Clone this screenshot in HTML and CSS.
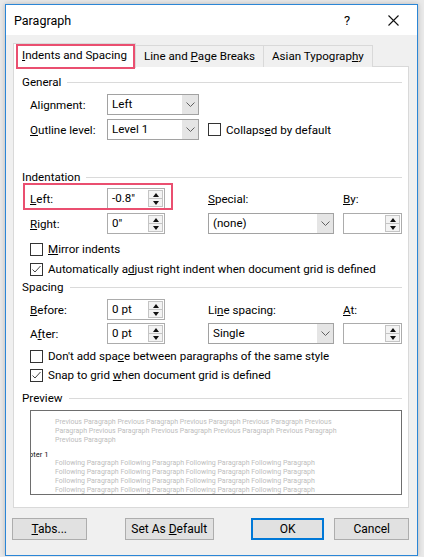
FILE: index.html
```html
<!DOCTYPE html>
<html>
<head>
<meta charset="utf-8">
<title>Paragraph</title>
<link rel="stylesheet" href="styles.css">
</head>
<body>
<div class="dialog">
	<div class="titlebar">
		<span class="title">Paragraph</span>
		<span class="help">?</span>
		<span class="close"><svg width="11" height="11" viewBox="0 0 11 11"><path d="M0.5 0.5L10.5 10.5M10.5 0.5L0.5 10.5" stroke="#111" stroke-width="1.1" fill="none"/></svg></span>
	</div>

	<div class="content">
		<div class="tabs">
			<div class="tab active mark"><u>I</u>ndents and Spacing</div>
			<div class="tab">Line and <u>P</u>age Breaks</div>
			<div class="tab">Asian Typograp<u>h</u>y</div>
		</div>

		<div class="panel">
			<div class="group-head">General</div>
			<div class="row r-align">
				<span class="lbl">Ali<u>g</u>nment:</span>
				<div class="select w-short"><span class="val">Left</span><span class="drop"><svg width="9" height="5" viewBox="0 0 9 5"><path d="M0.5 0.5L4.5 4.5L8.5 0.5" stroke="#606060" fill="none"/></svg></span></div>
			</div>
			<div class="row r-outline">
				<span class="lbl"><u>O</u>utline level:</span>
				<div class="select w-short"><span class="val">Level 1</span><span class="drop"><svg width="9" height="5" viewBox="0 0 9 5"><path d="M0.5 0.5L4.5 4.5L8.5 0.5" stroke="#606060" fill="none"/></svg></span></div>
				<label class="check side"><span class="box"></span><span>Collaps<u>e</u>d by default</span></label>
			</div>

			<div class="group-head h-indent">Indentation</div>
			<div class="row r-left">
				<div class="pair mark">
					<span class="lbl"><u>L</u>eft:</span>
					<div class="spin"><span class="val">-0.8"</span><span class="arrows"><i><b class="up"></b></i><i><b class="dn"></b></i></span></div>
				</div>
				<span class="col2"><u>S</u>pecial:</span>
				<span class="col3"><u>B</u>y:</span>
			</div>
			<div class="row r-right">
				<span class="lbl"><u>R</u>ight:</span>
				<div class="spin"><span class="val">0"</span><span class="arrows"><i><b class="up"></b></i><i><b class="dn"></b></i></span></div>
				<div class="select col2 w-wide"><span class="val">(none)</span><span class="drop"><svg width="9" height="5" viewBox="0 0 9 5"><path d="M0.5 0.5L4.5 4.5L8.5 0.5" stroke="#606060" fill="none"/></svg></span></div>
				<div class="spin col3 w-by"><span class="val"></span><span class="arrows"><i><b class="up"></b></i><i><b class="dn"></b></i></span></div>
			</div>
			<label class="check r-mirror"><span class="box"></span><span><u>M</u>irror indents</span></label>
			<label class="check r-auto"><span class="box"><svg width="11" height="11" viewBox="0 0 11 11"><path d="M1.5 5.5L4 8L9.5 2" stroke="#444" fill="none"/></svg></span><span>Automatically a<u>d</u>just right indent when document grid is defined</span></label>

			<div class="group-head h-spacing">Spacing</div>
			<div class="row r-before">
				<span class="lbl"><u>B</u>efore:</span>
				<div class="spin"><span class="val">0 pt</span><span class="arrows"><i><b class="up"></b></i><i><b class="dn"></b></i></span></div>
				<span class="col2">Li<u>n</u>e spacing:</span>
				<span class="col3"><u>A</u>t:</span>
			</div>
			<div class="row r-after">
				<span class="lbl">A<u>f</u>ter:</span>
				<div class="spin"><span class="val">0 pt</span><span class="arrows"><i><b class="up"></b></i><i><b class="dn"></b></i></span></div>
				<div class="select col2 w-wide"><span class="val">Single</span><span class="drop"><svg width="9" height="5" viewBox="0 0 9 5"><path d="M0.5 0.5L4.5 4.5L8.5 0.5" stroke="#606060" fill="none"/></svg></span></div>
				<div class="spin col3 w-by"><span class="val"></span><span class="arrows"><i><b class="up"></b></i><i><b class="dn"></b></i></span></div>
			</div>
			<label class="check r-nospace"><span class="box"></span><span>Don't add spa<u>c</u>e between paragraphs of the same style</span></label>
			<label class="check r-snap"><span class="box"><svg width="11" height="11" viewBox="0 0 11 11"><path d="M1.5 5.5L4 8L9.5 2" stroke="#444" fill="none"/></svg></span><span>Snap to grid <u>w</u>hen document grid is defined</span></label>

			<div class="group-head h-preview">Preview</div>
			<div class="preview">
				<div class="pv-lines">
					<div>Previous Paragraph Previous Paragraph Previous Paragraph Previous Paragraph Previous</div>
					<div>Paragraph Previous Paragraph Previous Paragraph Previous Paragraph Previous Paragraph</div>
					<div>Previous Paragraph</div>
				</div>
				<div class="pv-current">Chapter 1</div>
				<div class="pv-lines">
					<div>Following Paragraph Following Paragraph Following Paragraph Following Paragraph</div>
					<div>Following Paragraph Following Paragraph Following Paragraph Following Paragraph</div>
					<div>Following Paragraph Following Paragraph Following Paragraph Following Paragraph</div>
					<div>Following Paragraph Following Paragraph Following Paragraph Following Paragraph</div>
				</div>
			</div>
		</div>

		<div class="buttons">
			<button class="btn b-tabs"><u>T</u>abs...</button>
			<button class="btn b-default">Set As <u>D</u>efault</button>
			<button class="btn b-ok">OK</button>
			<button class="btn b-cancel">Cancel</button>
		</div>
	</div>
</div>
</body>
</html>
```

FILE: styles.css
```css
body{
margin:0;
background:#e9e9e9;
font-family:Roboto, "Noto Sans", sans-serif;
font-size:11.6px;
color:#000;
}
u{
text-underline-offset:1px;
}
.dialog{
margin:4px 0 0 5px;
width:411px;
height:550px;
border:1px solid #2b86d6;
background:#f0f0f0;
box-shadow:0 0 5px rgba(0,0,0,.22);
}

/* title bar */
.titlebar{
height:30px;
background:#fff;
display:flex;
align-items:center;
}
.title{
padding-left:8px;
flex:1;
font-size:12.5px;
}
.help{
width:14px;
font-size:13px;
margin-right:30px;
}
.close{
display:flex;
margin-right:18px;
}

.content{
padding:8px 8px 0 7px;
}

/* tabs */
.tabs{
display:flex;
height:24px;
}
.tab{
box-sizing:border-box;
height:22px;
margin-top:2px;
padding:0 8px;
line-height:20px;
border:1px solid #d9d9d9;
border-bottom:none;
border-left:none;
background:#f0f0f0;
}
.tab.active{
height:25px;
margin-top:0;
line-height:23px;
border-left:1px solid #d9d9d9;
background:#fff;
position:relative;
z-index:1;
}
.mark{
position:relative;
}
.mark::after{
content:"";
position:absolute;
border:2px solid #ea4f70;
pointer-events:none;
}
.tab.mark::after{
left:2px;
right:0;
top:0;
bottom:-1px;
}

.panel{
box-sizing:border-box;
height:442px;
margin-top:-1px;
background:#fff;
border:1px solid #d9d9d9;
padding:7px 6px 0 8px;
}

.group-head{
display:flex;
align-items:center;
height:16px;
line-height:16px;
}
.group-head::after{
content:"";
flex:1;
margin-left:6px;
margin-top:1px;
border-top:1px solid #dadada;
}

.row{
display:flex;
align-items:center;
height:21px;
padding-left:8px;
}
.lbl{
width:77px;
}
.col2{
box-sizing:border-box;
margin-left:43px;
width:126px;
}
.col3{
box-sizing:border-box;
margin-left:9px;
width:59px;
}

.r-align{ margin-top:4px; }
.r-outline{ margin-top:4px; }
.h-indent{ margin-top:29px; }
.r-left{ margin-top:3px; }
.r-right{ margin-top:4px; }
.r-mirror{ margin-top:7px; }
.r-auto{ margin-top:4px; }
.h-spacing{ margin-top:2px; }
.r-before{ margin-top:4px; }
.r-after{ margin-top:3px; }
.r-nospace{ margin-top:4px; }
.r-snap{ margin-top:3px; }
.h-preview{ margin-top:7px; }

.pair{
display:flex;
align-items:center;
}
.pair.mark::after{
left:-7px;
right:-8px;
top:-5px;
bottom:-1px;
}

/* drop-down lists */
.select{
box-sizing:border-box;
display:flex;
height:21px;
border:1px solid #a2a2a2;
background:#fff;
}
.w-short{ width:92px; }
.w-wide{ width:126px; }
.select .val{
flex:1;
padding-left:4px;
line-height:19px;
}
.select .drop{
width:16px;
background:#e5e5e5;
display:flex;
align-items:center;
justify-content:center;
}

/* spin boxes */
.spin{
box-sizing:border-box;
display:flex;
width:58px;
height:21px;
border:1px solid #acacac;
background:#fff;
}
.w-by{ width:59px; }
.spin .val{
flex:1;
padding-left:4px;
line-height:19px;
}
.arrows{
width:15px;
display:flex;
flex-direction:column;
padding:1px 1px 1px 0;
}
.arrows i{
flex:1;
display:flex;
align-items:center;
justify-content:center;
border:1px solid #c4c4c4;
background:#f3f3f3;
}
.arrows i + i{
border-top:none;
}
.up{
width:0;
height:0;
border-left:3.5px solid transparent;
border-right:3.5px solid transparent;
border-bottom:4px solid #111;
}
.dn{
width:0;
height:0;
border-left:3.5px solid transparent;
border-right:3.5px solid transparent;
border-top:4px solid #111;
}

/* check boxes */
.check{
display:flex;
align-items:center;
height:16px;
padding-left:8px;
white-space:nowrap;
}
.check.side{
margin-left:9px;
padding-left:0;
}
.box{
box-sizing:border-box;
flex:none;
width:13px;
height:13px;
border:1px solid #333;
background:#fff;
margin-right:5px;
display:flex;
align-items:center;
justify-content:center;
}

/* preview */
.preview{
box-sizing:border-box;
height:85px;
margin:4px 0 0 8px;
border:1px solid #6e6e6e;
overflow:hidden;
padding:7px 0 0 24px;
font-size:7px;
line-height:9px;
}
.pv-lines{
color:#bdbdbd;
white-space:nowrap;
}
.pv-current{
margin:5px 0 0 -39px;
font-size:7.5px;
line-height:9px;
color:#111;
}

/* buttons */
.buttons{
display:flex;
margin:10px 0 0 -1px;
}
.btn{
box-sizing:border-box;
height:22px;
padding:0;
font:inherit;
font-size:12px;
color:#000;
background:#e1e1e1;
border:1px solid #adadad;
}
.b-tabs{ width:75px; }
.b-default{ width:90px; margin-left:38px; }
.b-ok{ width:74px; margin-left:37px; border:2px solid #0078d7; }
.b-cancel{ width:75px; margin-left:10px; }
```
